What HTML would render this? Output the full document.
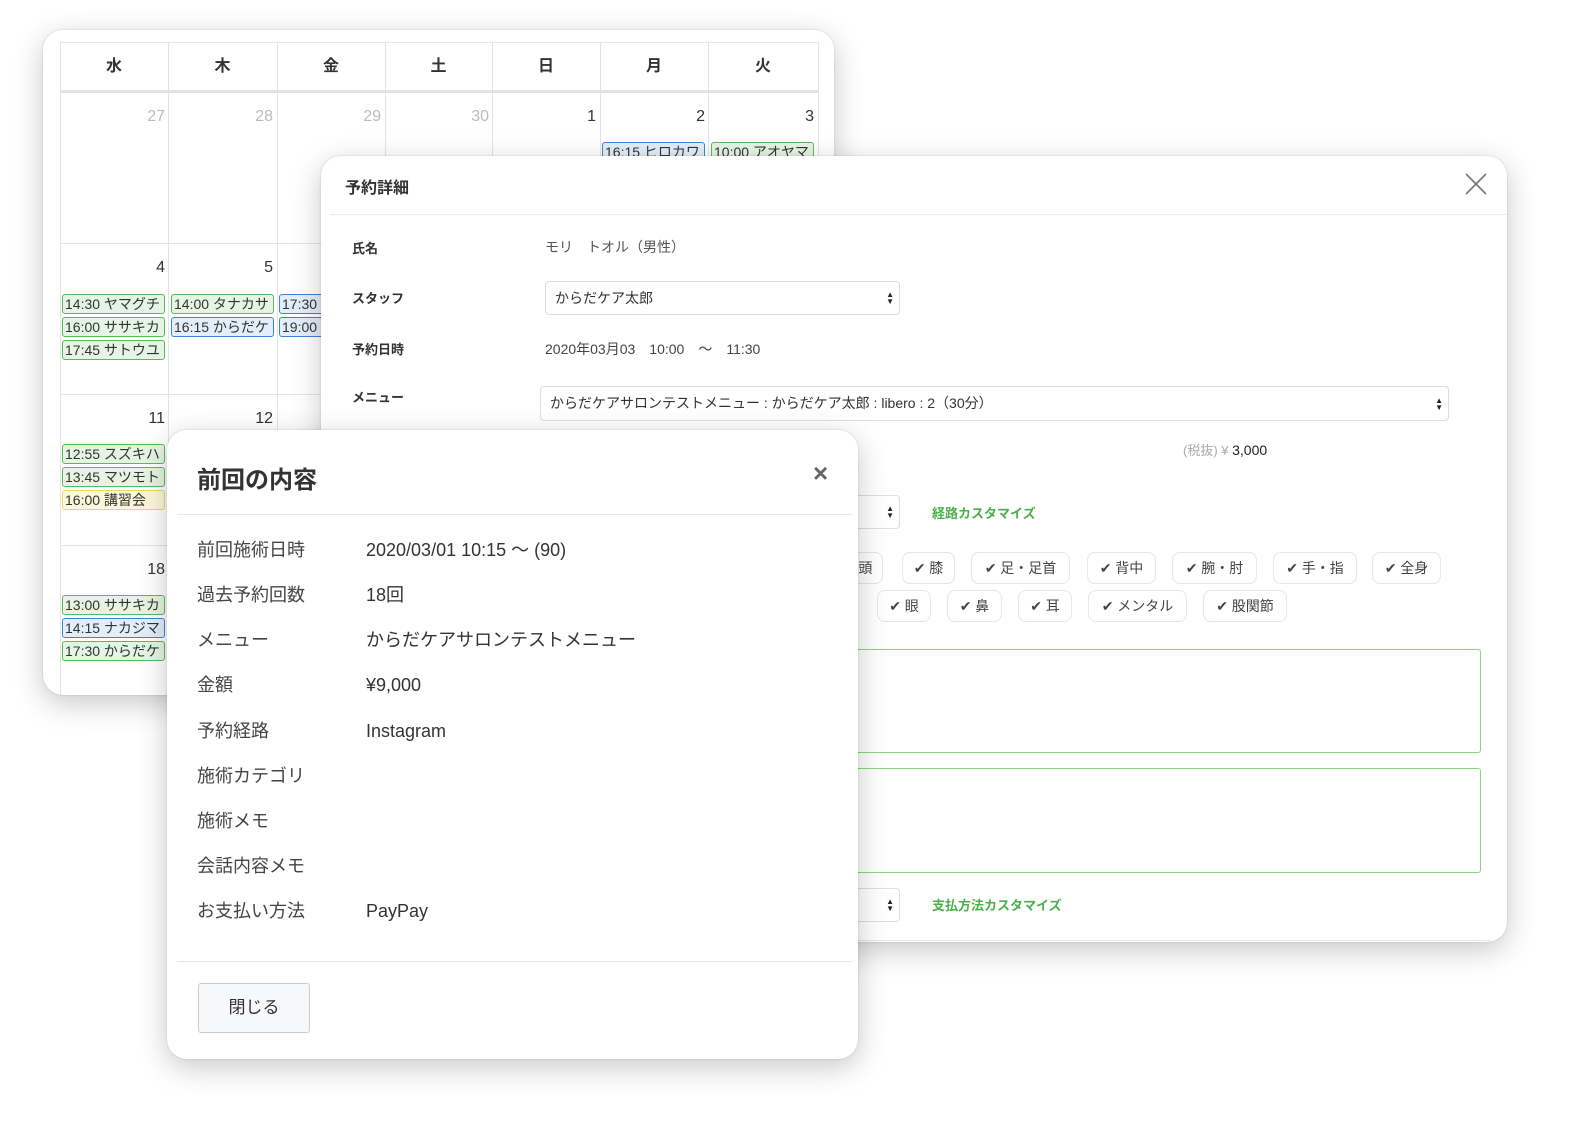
<!DOCTYPE html>
<html><head><meta charset="utf-8">
<style>
*{box-sizing:border-box;margin:0;padding:0}
body{width:1583px;height:1136px;background:#fff;position:relative;overflow:hidden;font-family:"Liberation Sans","Noto Sans CJK JP",sans-serif;color:#333}
.abs{position:absolute}
.card{position:absolute;background:#fff;border-radius:20px;box-shadow:0 8px 30px rgba(0,0,0,.22),0 0 2px rgba(0,0,0,.15);overflow:hidden}
.hd{position:absolute;top:42px;height:50px;font-size:16px;font-weight:bold;text-align:center;line-height:50px;color:#333}
.vl{position:absolute;width:1px;background:#e4e4e4}
.hl{position:absolute;height:1px;background:#e4e4e4}
.dn{position:absolute;font-size:16px;text-align:right;width:100px}
.ev{position:absolute;height:20px;font-size:14px;line-height:18px;padding-left:2px;border:1px solid;border-radius:3px;white-space:nowrap;overflow:hidden;width:103px}
.g{background:#e5f5e3;border-color:#5cb85c}
.b{background:#e2eef9;border-color:#3f84d4}
.y{background:#fdf7d9;border-color:#f0d66e}
.lab{position:absolute;font-size:13px;font-weight:bold;color:#333}
.sel{position:absolute;border:1px solid #ddd;border-radius:4px;font-size:14px;padding-left:9px;background:#fff}
.arr{position:absolute;right:5px;top:50%;transform:translateY(-50%);font-size:8px;line-height:7px;color:#222}
.tag{position:absolute;height:32px;border:1px solid #e6e6e6;border-radius:8px;font-size:14px;line-height:30px;text-align:center;color:#444;background:#fff}
.ta{position:absolute;border:1.5px solid #8fd18a;border-radius:3px;background:#fff}
.gr{position:absolute;font-size:13px;font-weight:bold;color:#4cb04a}
.pl{position:absolute;left:30px;font-size:18px;color:#444;line-height:24px;height:24px}
.pv{position:absolute;left:199px;font-size:18px;color:#333;line-height:24px;height:24px}
</style></head><body>

<div class="card" style="left:43px;top:30px;width:791px;height:665px;"></div>
<div class="abs" style="left:43px;top:30px;width:791px;height:665px;overflow:hidden;border-radius:20px">
  <div class="hl" style="left:17px;top:12px;width:758px;background:#e8e8e8"></div>
  <div class="hl" style="left:17px;top:60px;width:758px;height:3px;background:#e3e3e3"></div>
  <div class="hl" style="left:17px;top:213px;width:758px"></div>
  <div class="hl" style="left:17px;top:364px;width:758px"></div>
  <div class="hl" style="left:17px;top:515px;width:758px"></div>
  <div class="vl" style="left:17px;top:12px;height:660px"></div>
  <div class="vl" style="left:125px;top:12px;height:660px"></div>
  <div class="vl" style="left:234px;top:12px;height:660px"></div>
  <div class="vl" style="left:342px;top:12px;height:660px"></div>
  <div class="vl" style="left:449px;top:12px;height:660px"></div>
  <div class="vl" style="left:557px;top:12px;height:660px"></div>
  <div class="vl" style="left:665px;top:12px;height:660px"></div>
  <div class="vl" style="left:775px;top:12px;height:660px"></div>
</div>
<div class="hd" style="left:60px;width:108px">水</div>
<div class="hd" style="left:168px;width:109px">木</div>
<div class="hd" style="left:277px;width:108px">金</div>
<div class="hd" style="left:385px;width:107px">土</div>
<div class="hd" style="left:492px;width:108px">日</div>
<div class="hd" style="left:600px;width:108px">月</div>
<div class="hd" style="left:708px;width:110px">火</div>

<div class="dn" style="left:65px;top:108px;color:#bbb">27</div>
<div class="dn" style="left:173px;top:108px;color:#bbb">28</div>
<div class="dn" style="left:281px;top:108px;color:#bbb">29</div>
<div class="dn" style="left:389px;top:108px;color:#bbb">30</div>
<div class="dn" style="left:496px;top:108px">1</div>
<div class="dn" style="left:605px;top:108px">2</div>
<div class="dn" style="left:714px;top:108px">3</div>
<div class="ev b" style="left:602px;top:142px">16:15 ヒロカワ</div>
<div class="ev g" style="left:711px;top:142px">10:00 アオヤマ</div>

<div class="dn" style="left:65px;top:259px">4</div>
<div class="dn" style="left:173px;top:259px">5</div>
<div class="ev g" style="left:62px;top:294px">14:30 ヤマグチ</div>
<div class="ev g" style="left:62px;top:317px">16:00 ササキカ</div>
<div class="ev g" style="left:62px;top:340px">17:45 サトウユ</div>
<div class="ev g" style="left:171px;top:294px">14:00 タナカサ</div>
<div class="ev b" style="left:171px;top:317px">16:15 からだケ</div>
<div class="ev b" style="left:279px;top:294px">17:30</div>
<div class="ev b" style="left:279px;top:317px">19:00</div>

<div class="dn" style="left:65px;top:410px">11</div>
<div class="dn" style="left:173px;top:410px">12</div>
<div class="ev g" style="left:62px;top:444px">12:55 スズキハ</div>
<div class="ev g" style="left:62px;top:467px">13:45 マツモト</div>
<div class="ev y" style="left:62px;top:490px">16:00 講習会</div>
<div class="dn" style="left:65px;top:561px">18</div>
<div class="ev g" style="left:62px;top:595px">13:00 ササキカ</div>
<div class="ev b" style="left:62px;top:618px">14:15 ナカジマ</div>
<div class="ev g" style="left:62px;top:641px">17:30 からだケ</div>

<div class="card" style="left:321px;top:156px;width:1186px;height:786px;">
  <div class="abs" style="left:24px;top:18px;font-size:16px;font-weight:bold;color:#333">予約詳細</div>
  <svg class="abs" style="left:1143px;top:16px" width="24" height="24" viewBox="0 0 24 24"><path d="M2 2L22 22M22 2L2 22" stroke="#777" stroke-width="1.6"/></svg>
  <div class="hl" style="left:9px;top:58px;width:1177px;background:#ececec"></div>
  <div class="lab" style="left:31px;top:82px">氏名</div>
  <div class="abs" style="left:224px;top:81px;font-size:14px;color:#555">モリ　トオル（男性）</div>
  <div class="lab" style="left:31px;top:132px">スタッフ</div>
  <div class="sel" style="left:224px;top:125px;width:355px;height:34px;line-height:32px">からだケア太郎<div class="arr">▲<br>▼</div></div>
  <div class="lab" style="left:31px;top:183px">予約日時</div>
  <div class="abs" style="left:224px;top:183px;font-size:14px;color:#444">2020年03月03　10:00　～　11:30</div>
  <div class="lab" style="left:31px;top:231px">メニュー</div>
  <div class="sel" style="left:219px;top:230px;width:909px;height:35px;line-height:33px">からだケアサロンテストメニュー : からだケア太郎 : libero : 2（30分）<div class="arr">▲<br>▼</div></div>
  <div class="abs" style="left:862px;top:284px;font-size:13px;color:#aaa">(税抜) ¥ <span style="color:#222;font-size:14px">3,000</span></div>
  <div class="sel" style="left:500px;top:339px;width:79px;height:34px"><div class="arr">▲<br>▼</div></div>
  <div class="gr" style="left:611px;top:347px">経路カスタマイズ</div>
  <div class="ta" style="left:520px;top:493px;width:640px;height:104px"></div>
  <div class="ta" style="left:520px;top:612px;width:640px;height:105px"></div>
  <div class="sel" style="left:500px;top:732px;width:79px;height:34px"><div class="arr">▲<br>▼</div></div>
  <div class="gr" style="left:611px;top:739px">支払方法カスタマイズ</div>
  <div class="hl" style="left:530px;top:784px;width:640px;background:#e6e6e6"></div>
</div>
<div class="tag" style="left:840px;top:552px;width:43px">&nbsp;&nbsp;頭</div>
<div class="tag" style="left:902px;top:552px;width:53px">✔ 膝</div>
<div class="tag" style="left:971px;top:552px;width:99px">✔ 足・足首</div>
<div class="tag" style="left:1087px;top:552px;width:69px">✔ 背中</div>
<div class="tag" style="left:1172px;top:552px;width:85px">✔ 腕・肘</div>
<div class="tag" style="left:1273px;top:552px;width:84px">✔ 手・指</div>
<div class="tag" style="left:1372px;top:552px;width:69px">✔ 全身</div>
<div class="tag" style="left:877px;top:590px;width:54px">✔ 眼</div>
<div class="tag" style="left:947px;top:590px;width:55px">✔ 鼻</div>
<div class="tag" style="left:1018px;top:590px;width:54px">✔ 耳</div>
<div class="tag" style="left:1088px;top:590px;width:99px">✔ メンタル</div>
<div class="tag" style="left:1203px;top:590px;width:84px">✔ 股関節</div>

<div class="card" style="left:167px;top:430px;width:691px;height:629px;">
  <div class="abs" style="left:30px;top:30px;font-size:24px;font-weight:bold;color:#333">前回の内容</div>
  <div class="abs" style="left:646px;top:28px;font-size:26px;font-weight:bold;color:#666">×</div>
  <div class="hl" style="left:10px;top:84px;width:675px;background:#e8e8e8"></div>
  <div class="pl" style="top:108px">前回施術日時</div><div class="pv" style="top:108px">2020/03/01 10:15 〜 (90)</div>
  <div class="pl" style="top:153px">過去予約回数</div><div class="pv" style="top:153px">18回</div>
  <div class="pl" style="top:198px">メニュー</div><div class="pv" style="top:198px">からだケアサロンテストメニュー</div>
  <div class="pl" style="top:243px">金額</div><div class="pv" style="top:243px">¥9,000</div>
  <div class="pl" style="top:289px">予約経路</div><div class="pv" style="top:289px">Instagram</div>
  <div class="pl" style="top:334px">施術カテゴリ</div>
  <div class="pl" style="top:379px">施術メモ</div>
  <div class="pl" style="top:424px">会話内容メモ</div>
  <div class="pl" style="top:469px">お支払い方法</div><div class="pv" style="top:469px">PayPay</div>
  <div class="hl" style="left:10px;top:531px;width:675px;background:#e8e8e8"></div>
  <div class="abs" style="left:31px;top:553px;width:112px;height:50px;border:1px solid #ccc;border-radius:3px;background:#f7f8fa;font-size:17px;line-height:48px;text-align:center;color:#333">閉じる</div>
</div>
</body></html>
